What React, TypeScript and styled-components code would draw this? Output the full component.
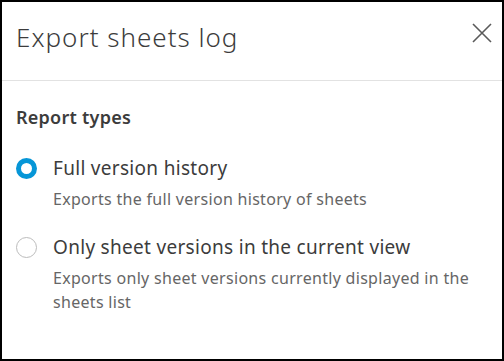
import { useState } from 'react';
import styled, { createGlobalStyle } from 'styled-components';

const GlobalStyle = createGlobalStyle`
  html, body { margin: 0; padding: 0; background: #fff; }
  * { box-sizing: border-box; }
`;

const Frame = styled.div`
  width: 504px;
  height: 361px;
  border: 2px solid #000;
  background: #fff;
  display: flex;
  flex-direction: column;
  font-family: "Noto Sans", "Open Sans", sans-serif;
  color: #3c3c3c;
`;

const Header = styled.header`
  height: 79px;
  display: flex;
  align-items: flex-start;
  justify-content: space-between;
  padding: 19px 8px 0 14px;
  border-bottom: 1px solid #e2e2e2;
`;

const Title = styled.h1`
  margin: 0;
  font-size: 26px;
  line-height: 32px;
  font-weight: 300;
  letter-spacing: 1px;
  color: #3c3c3c;
`;

const CloseButton = styled.button`
  width: 24px;
  height: 24px;
  padding: 0;
  border: none;
  background: none;
  display: flex;
  align-items: center;
  justify-content: center;
  color: #5a5a5a;
  cursor: pointer;
`;

const Body = styled.div`
  padding: 24px 14px 0 14px;
  display: flex;
  flex-direction: column;
`;

const SectionLabel = styled.div`
  font-size: 18px;
  line-height: 24px;
  font-weight: 600;
  letter-spacing: 0.25px;
  color: #3c3c3c;
  margin-bottom: 27px;
`;

const Options = styled.div`
  display: flex;
  flex-direction: column;
  gap: 24px;
`;

const Option = styled.label`
  display: grid;
  grid-template-columns: 20px 1fr;
  column-gap: 17px;
  row-gap: 7px;
  cursor: pointer;
`;

const RadioDot = styled.span<{ $checked: boolean }>`
  width: 21px;
  height: 21px;
  border-radius: 50%;
  align-self: center;
  border: ${({ $checked }) => ($checked ? '5px solid #0696d7' : '1px solid #bcbcbc')};
  background: #fff;
`;

const OptionTitle = styled.span`
  font-size: 19px;
  line-height: 24px;
  letter-spacing: 0.3px;
  color: #3c3c3c;
`;

const OptionText = styled.span`
  grid-column: 2;
  font-size: 16px;
  line-height: 24px;
  letter-spacing: 0.3px;
  color: #666;
  padding-right: 14px;
`;

const options = [
  {
    id: 'full',
    title: 'Full version history',
    text: 'Exports the full version history of sheets',
  },
  {
    id: 'current',
    title: 'Only sheet versions in the current view',
    text: 'Exports only sheet versions currently displayed in the sheets list',
  },
];

export default function App() {
  const [selected, setSelected] = useState('full');

  return (
    <>
      <GlobalStyle />
      <Frame>
        <Header>
          <Title>Export sheets log</Title>
          <CloseButton aria-label="Close">
            <svg width="20" height="20" viewBox="0 0 20 20" fill="none">
              <path d="M1 1 L19 19 M19 1 L1 19" stroke="currentColor" strokeWidth="1.6" />
            </svg>
          </CloseButton>
        </Header>
        <Body>
          <SectionLabel>Report types</SectionLabel>
          <Options>
            {options.map(o => (
              <Option key={o.id} onClick={() => setSelected(o.id)}>
                <RadioDot $checked={selected === o.id} />
                <OptionTitle>{o.title}</OptionTitle>
                <OptionText>{o.text}</OptionText>
              </Option>
            ))}
          </Options>
        </Body>
      </Frame>
    </>
  );
}
